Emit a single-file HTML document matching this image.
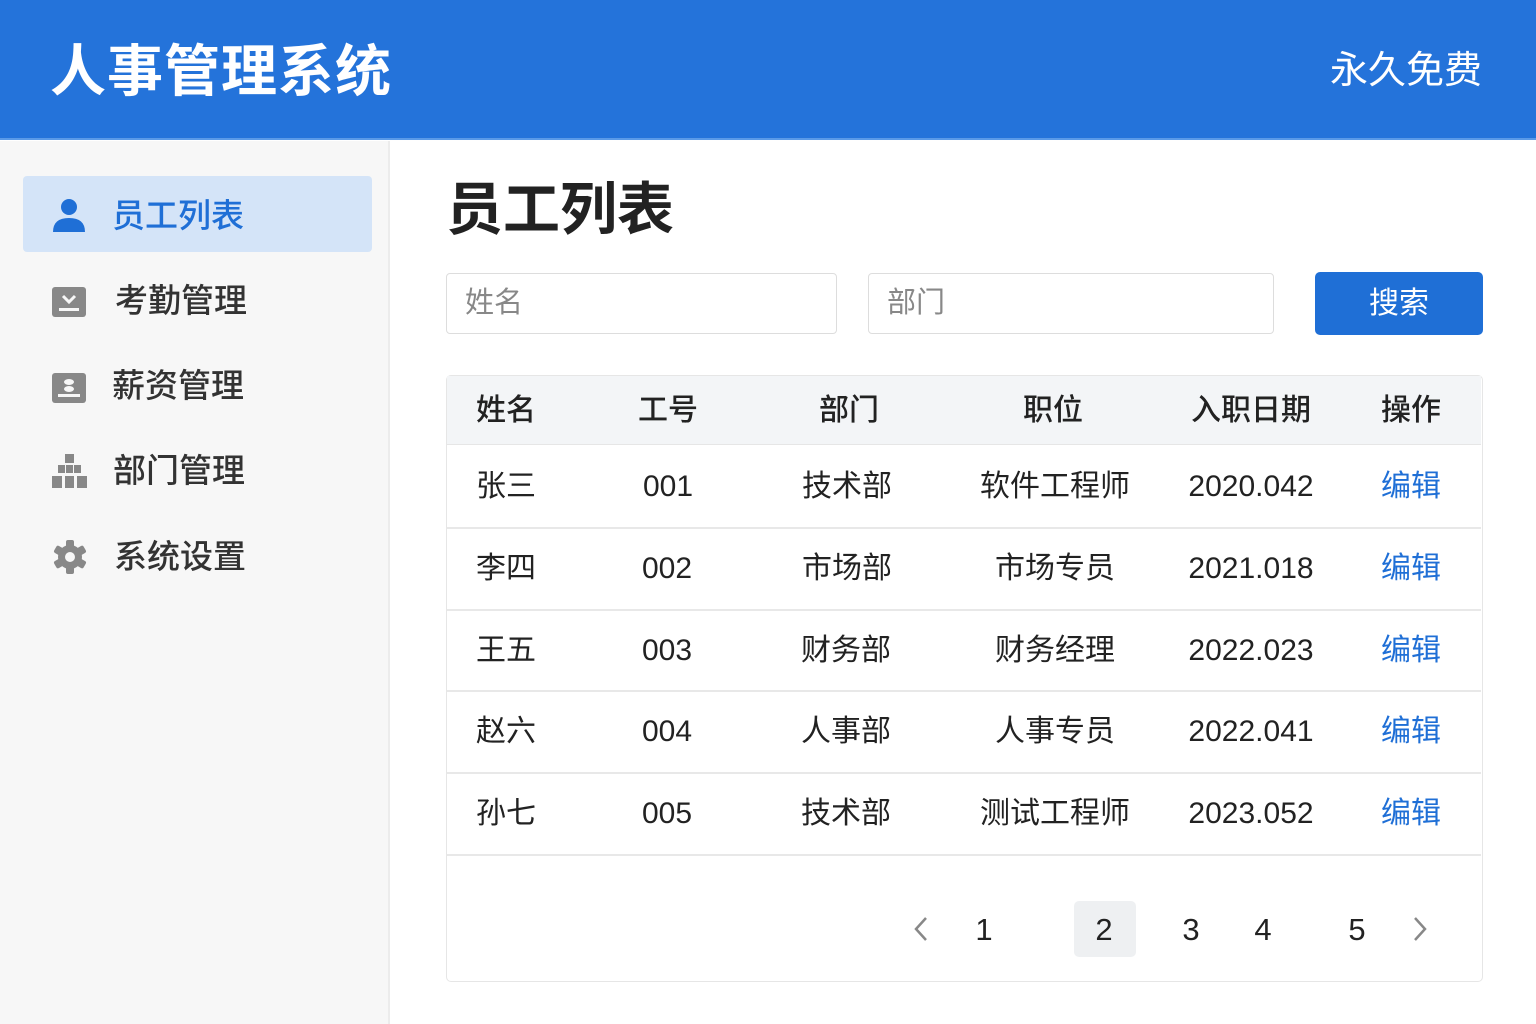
<!DOCTYPE html>
<html><head><meta charset="utf-8"><style>
*{margin:0;padding:0;box-sizing:border-box}
body{width:1536px;height:1024px;position:relative;background:#fff;font-family:"Liberation Sans","Noto Sans CJK SC",sans-serif;color:#222;overflow:hidden}
.a{position:absolute;white-space:nowrap}
.c{transform:translateX(-50%)}
#hd{left:0;top:0;width:1536px;height:140px;background:#2473da;border-bottom:2px solid #5a9ae8}
#sb{left:0;top:141px;width:390px;height:883px;background:#f7f7f7;border-right:2px solid #ececec}
.nav{font-size:33px;font-weight:500;color:#333;line-height:40px}
.inp{border:1.5px solid #ddd;border-radius:4px;height:61px;font-size:29px;color:#888;padding-left:18px;line-height:58px}
.cell{font-size:30px;line-height:40px;color:#222}
.hdc{font-size:30px;line-height:40px;font-weight:500;color:#222}
.ed{color:#1f6fd6}
.line{left:447px;width:1034px;height:1.5px;background:#e8e8e8}
.pg{font-size:31px;line-height:40px;color:#222}
</style></head><body>
<div class="a" id="hd"></div>
<div class="a" style="left:50px;top:38px;font-size:56px;font-weight:700;color:#fff;line-height:68px;letter-spacing:1px">人事管理系统</div>
<div class="a" style="right:54px;top:48px;font-size:38px;color:#fff;line-height:46px">永久免费</div>
<div class="a" id="sb"></div>
<div class="a" style="left:23px;top:176px;width:349px;height:76px;background:#d4e4f8;border-radius:4px"></div>
<svg class="a" style="left:52px;top:198px" width="34" height="36" viewBox="0 0 34 36"><circle cx="17" cy="9" r="8" fill="#1f6fd6"/><path d="M1 34 Q1 20 17 20 Q33 20 33 34 Z" fill="#1f6fd6"/></svg>
<div class="a nav" style="left:112px;top:196px;color:#1f6fd6">员工列表</div>
<svg class="a" style="left:52px;top:287px" width="34" height="30" viewBox="0 0 34 30"><rect width="34" height="30" rx="3" fill="#888"/><path d="M11 9 L17 15 L23 9" stroke="#f7f7f7" stroke-width="3" fill="none"/><rect x="7" y="21" width="20" height="3" fill="#f7f7f7"/></svg>
<div class="a nav" style="left:115px;top:281px">考勤管理</div>
<svg class="a" style="left:52px;top:373px" width="34" height="30" viewBox="0 0 34 30"><rect width="34" height="30" rx="3" fill="#888"/><ellipse cx="17" cy="9" rx="5" ry="3" fill="#f7f7f7"/><ellipse cx="17" cy="16" rx="5" ry="3" fill="#f7f7f7"/><rect x="6" y="21" width="22" height="3" fill="#f7f7f7"/></svg>
<div class="a nav" style="left:112px;top:366px">薪资管理</div>
<svg class="a" style="left:52px;top:454px" width="35" height="35" viewBox="0 0 35 35"><g fill="#888"><rect x="13" y="0" width="9" height="9"/><rect x="6" y="11" width="7" height="8"/><rect x="14" y="11" width="7" height="8"/><rect x="22" y="11" width="7" height="8"/><rect x="0" y="22" width="10" height="12"/><rect x="13" y="22" width="9" height="12"/><rect x="25" y="22" width="10" height="12"/></g></svg>
<div class="a nav" style="left:113px;top:451px">部门管理</div>
<svg class="a" style="left:53px;top:540px" width="34" height="34" viewBox="0 0 34 34"><g fill="#888" transform="translate(17 17)"><circle r="12"/><rect x="-4" y="-17" width="8" height="34" rx="2"/><rect x="-4" y="-17" width="8" height="34" rx="2" transform="rotate(60)"/><rect x="-4" y="-17" width="8" height="34" rx="2" transform="rotate(120)"/></g><circle cx="17" cy="17" r="5" fill="#f7f7f7"/></svg>
<div class="a nav" style="left:114px;top:537px">系统设置</div>

<div class="a" style="left:446px;top:175px;font-size:57px;font-weight:700;line-height:70px;color:#222">员工列表</div>
<div class="a inp" style="left:446px;top:273px;width:391px">姓名</div>
<div class="a inp" style="left:868px;top:273px;width:406px">部门</div>
<div class="a" style="left:1315px;top:272px;width:168px;height:63px;background:#1f6fd6;border-radius:5px;color:#fff;font-size:30px;line-height:63px;text-align:center">搜索</div>

<div class="a" style="left:446px;top:375px;width:1037px;height:607px;border:1.5px solid #e6e6e6;border-radius:5px"></div>
<div class="a" style="left:447px;top:376px;width:1034px;height:69px;background:#f3f5f7;border-bottom:1.5px solid #e6e6e6"></div>
<div class="a hdc" style="left:476px;top:391px">姓名</div>
<div class="a hdc c" style="left:668px;top:391px">工号</div>
<div class="a hdc c" style="left:849px;top:391px">部门</div>
<div class="a hdc c" style="left:1053px;top:391px">职位</div>
<div class="a hdc c" style="left:1251px;top:391px">入职日期</div>
<div class="a hdc c" style="left:1411px;top:391px">操作</div>

<div class="a line" style="top:527px"></div>
<div class="a line" style="top:609px"></div>
<div class="a line" style="top:690px"></div>
<div class="a line" style="top:772px"></div>
<div class="a line" style="top:854px"></div>

<div class="a cell" style="left:476px;top:467px">张三</div><div class="a cell c" style="left:668px;top:467px">001</div><div class="a cell c" style="left:847px;top:467px">技术部</div><div class="a cell c" style="left:1055px;top:467px">软件工程师</div><div class="a cell c" style="left:1251px;top:467px">2020.042</div><div class="a cell c ed" style="left:1411px;top:467px">编辑</div>
<div class="a cell" style="left:476px;top:549px">李四</div><div class="a cell c" style="left:667px;top:549px">002</div><div class="a cell c" style="left:847px;top:549px">市场部</div><div class="a cell c" style="left:1055px;top:549px">市场专员</div><div class="a cell c" style="left:1251px;top:549px">2021.018</div><div class="a cell c ed" style="left:1411px;top:549px">编辑</div>
<div class="a cell" style="left:476px;top:631px">王五</div><div class="a cell c" style="left:667px;top:631px">003</div><div class="a cell c" style="left:846px;top:631px">财务部</div><div class="a cell c" style="left:1055px;top:631px">财务经理</div><div class="a cell c" style="left:1251px;top:631px">2022.023</div><div class="a cell c ed" style="left:1411px;top:631px">编辑</div>
<div class="a cell" style="left:476px;top:712px">赵六</div><div class="a cell c" style="left:667px;top:712px">004</div><div class="a cell c" style="left:846px;top:712px">人事部</div><div class="a cell c" style="left:1055px;top:712px">人事专员</div><div class="a cell c" style="left:1251px;top:712px">2022.041</div><div class="a cell c ed" style="left:1411px;top:712px">编辑</div>
<div class="a cell" style="left:476px;top:794px">孙七</div><div class="a cell c" style="left:667px;top:794px">005</div><div class="a cell c" style="left:846px;top:794px">技术部</div><div class="a cell c" style="left:1055px;top:794px">测试工程师</div><div class="a cell c" style="left:1251px;top:794px">2023.052</div><div class="a cell c ed" style="left:1411px;top:794px">编辑</div>

<div class="a" style="left:1074px;top:901px;width:62px;height:56px;background:#eef0f2;border-radius:5px"></div>
<svg class="a" style="left:913px;top:916px" width="16" height="26" viewBox="0 0 16 26"><path d="M13 2 L3 13 L13 24" stroke="#888" stroke-width="2.5" fill="none"/></svg>
<svg class="a" style="left:1412px;top:916px" width="16" height="26" viewBox="0 0 16 26"><path d="M3 2 L13 13 L3 24" stroke="#888" stroke-width="2.5" fill="none"/></svg>
<div class="a pg c" style="left:984px;top:910px">1</div>
<div class="a pg c" style="left:1104px;top:910px">2</div>
<div class="a pg c" style="left:1191px;top:910px">3</div>
<div class="a pg c" style="left:1263px;top:910px">4</div>
<div class="a pg c" style="left:1357px;top:910px">5</div>
</body></html>
